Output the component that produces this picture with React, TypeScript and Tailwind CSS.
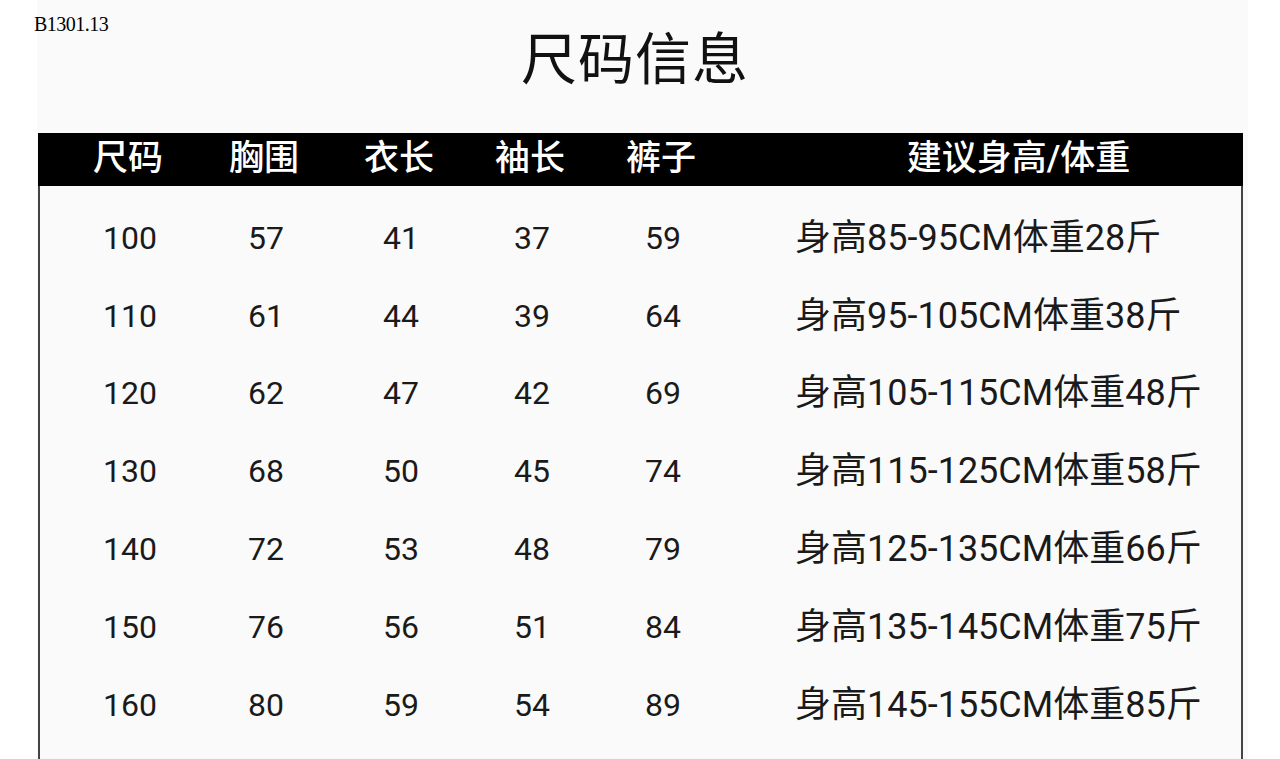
import React from "react";

const rows: [string, string, string, string, string, string][] = [
  ["100", "57", "41", "37", "59", "身高85-95CM体重28斤"],
  ["110", "61", "44", "39", "64", "身高95-105CM体重38斤"],
  ["120", "62", "47", "42", "69", "身高105-115CM体重48斤"],
  ["130", "68", "50", "45", "74", "身高115-125CM体重58斤"],
  ["140", "72", "53", "48", "79", "身高125-135CM体重66斤"],
  ["150", "76", "56", "51", "84", "身高135-145CM体重75斤"],
  ["160", "80", "59", "54", "89", "身高145-155CM体重85斤"],
];

const cjk = "font-['Roboto','Noto_Sans_CJK_SC',sans-serif]";
const cols = "grid grid-cols-[180px_92px_178px_84px_178px_1fr]";

const App: React.FC = () => {
  return (
    <div className="relative w-full h-[759px] bg-white overflow-hidden">
      {/* 货号水印 */}
      <span className="absolute left-[34px] top-[14px] font-['Liberation_Serif',serif] text-[20px] leading-none tracking-[-0.5px] text-black">
        B1301.13
      </span>

      <div className="ml-[37px] w-[1211px] h-full bg-[#fafafa] flex flex-col">
        {/* 标题 */}
        <h1 className="pt-[27px] pr-[15px] h-[133px] text-center font-['Noto_Sans_CJK_SC',sans-serif] text-[56px] leading-none text-[#111] tracking-[1px]">
          尺码信息
        </h1>

        <div className={`ml-[1px] w-[1205px] flex-1 flex flex-col ${cjk}`}>
          {/* 表头 */}
          <div className={`${cols} h-[53px] bg-black text-white text-[35px] font-medium items-center`}>
            <div className="text-center">尺码</div>
            <div className="text-center">胸围</div>
            <div className="text-center">衣长</div>
            <div className="text-center">袖长</div>
            <div className="text-center">裤子</div>
            <div className="text-center pl-[44px]">建议身高/体重</div>
          </div>

          {/* 表体 */}
          <div className="flex-1 border-x-2 border-[#444] pt-[13px] text-[#1a1a1a]">
            {rows.map((r) => (
              <div key={r[0]} className={`${cols} h-[77.8px] items-center text-[32px]`}>
                <div className="text-center">{r[0]}</div>
                <div className="text-center">{r[1]}</div>
                <div className="text-center">{r[2]}</div>
                <div className="text-center">{r[3]}</div>
                <div className="text-center">{r[4]}</div>
                <div className="pl-[43px] text-[36px] whitespace-nowrap">{r[5]}</div>
              </div>
            ))}
          </div>
        </div>
      </div>
    </div>
  );
};

export default App;
